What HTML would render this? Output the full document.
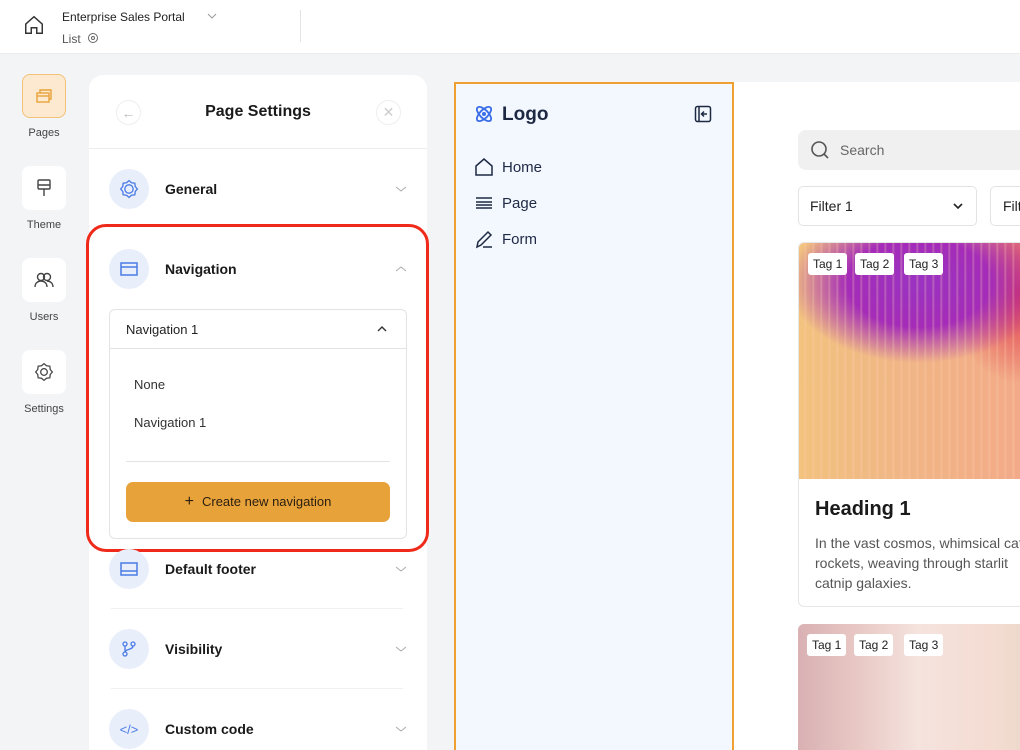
<!DOCTYPE html>
<html style="width:1020px;height:750px;overflow:hidden"><head><meta charset="utf-8">
<style>
*{box-sizing:border-box;margin:0;padding:0}
body{width:1020px;height:750px;overflow:hidden;background:#f3f4f6;font-family:"Liberation Sans",sans-serif;color:#1f2937;position:relative}
.abs{position:absolute}
.top{left:0;top:0;width:1020px;height:54px;background:#fff;border-bottom:1px solid #ececec}
.tile{left:22px;width:44px;height:44px;border-radius:8px;background:#fff;display:flex;align-items:center;justify-content:center}
.tl{left:0;width:88px;text-align:center;font-size:11px;color:#444}
.panel{left:89px;top:75px;width:338px;height:675px;background:#fff;border-radius:14px 14px 0 0}
.ic{width:40px;height:40px;border-radius:50%;background:#e8eefa;display:flex;align-items:center;justify-content:center}
.row{left:109px;width:298px;height:40px;display:flex;align-items:center}
.row b{margin-left:16px;font-size:14px;color:#1a1a1a;flex:1}
.sep{left:111px;width:292px;height:1px;background:#f0f0f0}
.nav{left:474px;display:flex;align-items:center;font-size:15px;color:#1e2a44}
.nav svg{margin-right:8px}
.tag{top:10px;height:22px;background:#fff;border-radius:3px;font-size:12px;padding:0 5px;line-height:22px;color:#222}
</style></head><body>
<div class="abs top"></div>
<svg class="abs" style="left:23px;top:14px" width="22" height="22" viewBox="0 0 24 24" fill="none" stroke="#333" stroke-width="1.6"><path d="M3 11 12 3l9 8v10h-6v-6H9v6H3z"/></svg>
<div class="abs" style="left:62px;top:10px;font-size:12px;color:#222">Enterprise Sales Portal</div>
<svg class="abs" style="left:207px;top:12px" width="10" height="8" viewBox="0 0 10 8" fill="none" stroke="#999"><path d="M1 2l4 4 4-4"/></svg>
<div class="abs" style="left:62px;top:32px;font-size:12px;color:#555">List</div>
<svg class="abs" style="left:87px;top:32px" width="12" height="12" viewBox="0 0 24 24" fill="none" stroke="#666" stroke-width="2"><circle cx="12" cy="12" r="3"/><circle cx="12" cy="12" r="9"/></svg>
<div class="abs" style="left:300px;top:10px;width:1px;height:32px;background:#e5e5e5"></div>

<div class="abs tile" style="top:74px;background:#fde9cf;border:1px solid #f3c27a"><svg width="20" height="18" viewBox="0 0 20 18" fill="none" stroke="#e8a23a" stroke-width="1.4"><rect x="3" y="6" width="12" height="9"/><path d="M6 6V3h11v9h-2"/><path d="M3 9h12"/></svg></div>
<div class="abs tl" style="top:127px">Pages</div>
<div class="abs tile" style="top:166px"><svg width="18" height="20" viewBox="0 0 18 20" fill="none" stroke="#444" stroke-width="1.4"><rect x="3" y="2" width="12" height="9" rx="1"/><path d="M3 7h12M9 11v7"/></svg></div>
<div class="abs tl" style="top:219px">Theme</div>
<div class="abs tile" style="top:258px"><svg width="20" height="16" viewBox="0 0 20 16" fill="none" stroke="#444" stroke-width="1.4"><circle cx="7" cy="5" r="3.5"/><circle cx="13" cy="5" r="3.5"/><path d="M1 15c0-4 3-6 6-6s6 2 6 6M13 9c3 0 6 2 6 6"/></svg></div>
<div class="abs tl" style="top:311px">Users</div>
<div class="abs tile" style="top:350px"><svg width="20" height="20" viewBox="0 0 24 24" fill="none" stroke="#444" stroke-width="1.5"><circle cx="12" cy="12" r="4"/><path d="M12 2l3 2.5 4 .5.5 4L22 12l-2.5 3-.5 4-4 .5L12 22l-3-2.5-4-.5-.5-4L2 12l2.5-3 .5-4 4-.5z"/></svg></div>
<div class="abs tl" style="top:403px">Settings</div>

<div class="abs panel"></div>
<div class="abs" style="left:116px;top:100px;width:25px;height:25px;border-radius:50%;border:1px solid #eee;display:flex;align-items:center;justify-content:center;color:#bbb;font-size:14px">←</div>
<div class="abs" style="left:376px;top:100px;width:25px;height:25px;border-radius:50%;border:1px solid #eee;display:flex;align-items:center;justify-content:center;color:#ccc;font-size:14px">✕</div>
<div class="abs" style="left:89px;width:338px;top:103px;text-align:center;font-size:16px;font-weight:bold;color:#1a1a1a">Page Settings</div>
<div class="abs" style="left:89px;width:338px;top:148px;height:1px;background:#ececec"></div>

<div class="abs row" style="top:169px"><div class="ic"><svg width="20" height="20" viewBox="0 0 24 24" fill="none" stroke="#4b7be5" stroke-width="1.6"><circle cx="12" cy="12" r="5"/><path d="M12 2l3 2.5 4 .5.5 4L22 12l-2.5 3-.5 4-4 .5L12 22l-3-2.5-4-.5-.5-4L2 12l2.5-3 .5-4 4-.5z"/></svg></div><b>General</b><svg width="12" height="8" viewBox="0 0 12 8" fill="none" stroke="#aaa"><path d="M1 2l5 4 5-4"/></svg></div>

<div class="abs" style="left:86px;top:224px;width:343px;height:328px;border:3px solid #f02a1a;border-radius:20px"></div>
<div class="abs row" style="top:249px"><div class="ic"><svg width="18" height="16" viewBox="0 0 18 16" fill="none" stroke="#4b7be5" stroke-width="1.5"><rect x="1" y="2" width="16" height="12"/><path d="M1 6h16"/></svg></div><b>Navigation</b><svg width="12" height="8" viewBox="0 0 12 8" fill="none" stroke="#aaa"><path d="M1 6l5-4 5 4"/></svg></div>

<div class="abs" style="left:109px;top:309px;width:298px;height:230px;border:1px solid #e3e3e3;border-radius:6px"></div>
<div class="abs" style="left:110px;top:348px;width:296px;height:1px;background:#e3e3e3"></div>
<div class="abs" style="left:126px;top:322px;font-size:13px;color:#222">Navigation 1</div>
<svg class="abs" style="left:376px;top:325px" width="12" height="8" viewBox="0 0 12 8" fill="none" stroke="#333" stroke-width="1.4"><path d="M2 6l4-4 4 4"/></svg>
<div class="abs" style="left:134px;top:377px;font-size:13px;color:#333">None</div>
<div class="abs" style="left:134px;top:415px;font-size:13px;color:#333">Navigation 1</div>
<div class="abs" style="left:126px;top:461px;width:264px;height:1px;background:#e3e3e3"></div>
<div class="abs" style="left:126px;top:482px;width:264px;height:40px;background:#e8a23a;border-radius:7px;text-align:center;line-height:40px;font-size:13px;color:#2a1f10"><span style="font-size:16px;margin-right:8px">+</span>Create new navigation</div>

<div class="abs row" style="top:549px"><div class="ic"><svg width="18" height="16" viewBox="0 0 18 16" fill="none" stroke="#4b7be5" stroke-width="1.5"><rect x="1" y="2" width="16" height="12"/><path d="M1 10h16"/></svg></div><b>Default footer</b><svg width="12" height="8" viewBox="0 0 12 8" fill="none" stroke="#aaa"><path d="M1 2l5 4 5-4"/></svg></div>
<div class="abs sep" style="top:608px"></div>
<div class="abs row" style="top:629px"><div class="ic"><svg width="18" height="18" viewBox="0 0 18 18" fill="none" stroke="#4b7be5" stroke-width="1.3"><circle cx="5" cy="4" r="2"/><circle cx="13" cy="4" r="2"/><circle cx="5" cy="14" r="2"/><path d="M5 6v6M13 6c0 4-8 3-8 6"/></svg></div><b>Visibility</b><svg width="12" height="8" viewBox="0 0 12 8" fill="none" stroke="#aaa"><path d="M1 2l5 4 5-4"/></svg></div>
<div class="abs sep" style="top:688px"></div>
<div class="abs row" style="top:709px"><div class="ic" style="color:#4b7be5;font-size:13px">&lt;/&gt;</div><b>Custom code</b><svg width="12" height="8" viewBox="0 0 12 8" fill="none" stroke="#aaa"><path d="M1 2l5 4 5-4"/></svg></div>

<div class="abs" style="left:734px;top:82px;width:286px;height:668px;background:#fff"></div>
<div class="abs" style="left:454px;top:82px;width:280px;height:680px;background:#f3f7fe;border:2px solid #f0a030"></div>
<svg class="abs" style="left:473px;top:103px" width="22" height="22" viewBox="0 0 24 24" fill="none" stroke="#3b6fe8" stroke-width="2"><ellipse cx="12" cy="12" rx="10" ry="4.5" transform="rotate(45 12 12)"/><ellipse cx="12" cy="12" rx="10" ry="4.5" transform="rotate(-45 12 12)"/><circle cx="12" cy="12" r="1.2" fill="#3b6fe8"/></svg>
<div class="abs" style="left:502px;top:104px;font-size:19px;font-weight:bold;color:#1e2a44">Logo</div>
<svg class="abs" style="left:694px;top:105px" width="18" height="18" viewBox="0 0 18 18" fill="none" stroke="#1e2a44" stroke-width="1.5"><rect x="1.5" y="1.5" width="15" height="15" rx="2"/><path d="M5 2v14M13 9H8m2-2.5L7.5 9 10 11.5"/></svg>
<div class="abs nav" style="top:157px"><svg width="20" height="20" viewBox="0 0 20 20" fill="none" stroke="#1e2a44" stroke-width="1.5"><path d="M2 9l8-7 8 7v9H2z"/></svg>Home</div>
<div class="abs nav" style="top:193px"><svg width="20" height="20" viewBox="0 0 20 20" fill="none" stroke="#1e2a44" stroke-width="1.5"><path d="M2 5h16M2 9h16M2 12h16M2 15h16"/></svg>Page</div>
<div class="abs nav" style="top:229px"><svg width="20" height="20" viewBox="0 0 20 20" fill="none" stroke="#1e2a44" stroke-width="1.5"><path d="M3 18l1-5L14 3l3 3L7 16zM9 18h9"/></svg>Form</div>

<div class="abs" style="left:798px;top:130px;width:240px;height:40px;background:#f0f0f0;border-radius:8px"></div>
<svg class="abs" style="left:810px;top:140px" width="20" height="20" viewBox="0 0 20 20" fill="none" stroke="#555" stroke-width="1.6"><circle cx="9" cy="9" r="7"/><path d="M14 14l4 4"/></svg>
<div class="abs" style="left:840px;top:142px;font-size:14px;color:#666">Search</div>
<div class="abs" style="left:798px;top:186px;width:179px;height:40px;border:1px solid #e3e3e3;border-radius:5px;background:#fff"></div>
<div class="abs" style="left:810px;top:198px;font-size:14px;color:#222">Filter 1</div>
<svg class="abs" style="left:952px;top:202px" width="12" height="8" viewBox="0 0 12 8" fill="none" stroke="#222" stroke-width="1.6"><path d="M2 2l4 4 4-4"/></svg>
<div class="abs" style="left:990px;top:186px;width:60px;height:40px;border:1px solid #e3e3e3;border-radius:5px;background:#fff;padding:11px 0 0 12px;font-size:14px;color:#222">Filter 2</div>

<div class="abs" style="left:798px;top:242px;width:240px;height:365px;border:1px solid #e6e6e6;border-radius:6px;background:#fff;overflow:hidden">
<div class="abs" style="left:0;top:0;width:240px;height:236px;background:linear-gradient(90deg,#f2c27e 0%,#f0b885 35%,#f3a888 100%)"></div>
<div class="abs" style="left:0;top:0;width:240px;height:150px;background:linear-gradient(180deg,rgba(0,0,0,0) 0%,rgba(0,0,0,0) 100%),radial-gradient(ellipse 130px 80px at 120px 40px,#9a33c2 0%,#a42cb8 55%,rgba(200,60,150,0) 100%),radial-gradient(ellipse 70px 90px at 220px 50px,#e0364c 0%,rgba(224,54,76,0) 100%)"></div>
<div class="abs" style="left:0;top:0;width:240px;height:236px;background:repeating-linear-gradient(90deg,rgba(255,255,255,0) 0px,rgba(255,255,255,0) 5px,rgba(255,210,180,.35) 6px,rgba(255,255,255,0) 8px)"></div>
<div class="abs tag" style="left:9px">Tag 1</div><div class="abs tag" style="left:56px">Tag 2</div><div class="abs tag" style="left:105px">Tag 3</div>
<div class="abs" style="left:16px;top:255px;font-size:20px;font-weight:bold;color:#1a1a1a">Heading 1</div>
<div class="abs" style="left:16px;top:290px;font-size:14px;line-height:20px;color:#555;white-space:nowrap">In the vast cosmos, whimsical cats<br>rockets, weaving through starlit<br>catnip galaxies.</div>
</div>
<div class="abs" style="left:798px;top:624px;width:240px;height:140px;border-radius:6px;overflow:hidden;background:linear-gradient(90deg,#d9b1b4 0%,#e8c8c4 25%,#f5e3de 50%,#f4dcd2 80%,#ead8c8 100%)">
<div class="abs tag" style="left:9px">Tag 1</div><div class="abs tag" style="left:56px">Tag 2</div><div class="abs tag" style="left:106px">Tag 3</div>
</div>
</body></html>
